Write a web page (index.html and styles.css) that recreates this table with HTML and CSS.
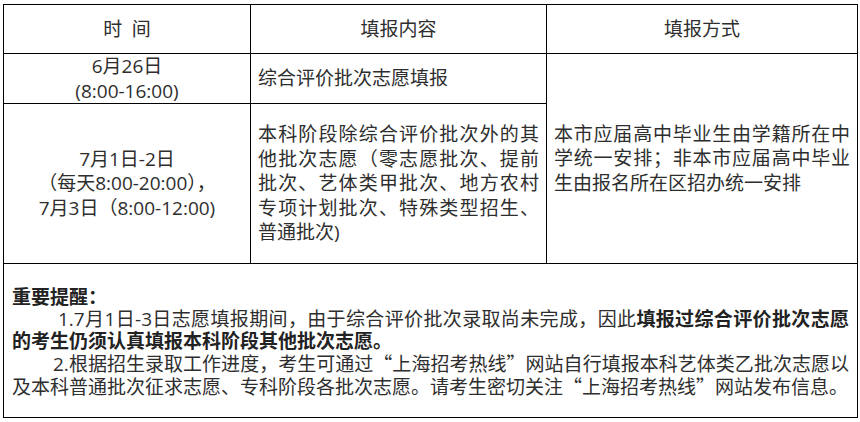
FILE: index.html
```html
<!DOCTYPE html>
<html lang="zh-CN">
<head>
<meta charset="utf-8">
<title>志愿填报安排</title>
<link rel="stylesheet" href="styles.css">
</head>
<body>
<div class="page">
  <table class="schedule">
    <colgroup>
      <col class="c-time">
      <col class="c-content">
      <col class="c-method">
    </colgroup>
    <tr class="head">
      <td class="center">时&ensp;间</td>
      <td class="center">填报内容</td>
      <td class="center">填报方式</td>
    </tr>
    <tr class="row1">
      <td class="center lift">6月26日<br>(8:00-16:00)</td>
      <td class="text">综合评价批次志愿填报</td>
      <td class="text method" rowspan="2">本市应届高中毕业生由学籍所在中学统一安排；非本市应届高中毕业生由报名所在区招办统一安排</td>
    </tr>
    <tr class="row2">
      <td class="center">7月1日-2日<br>（每天8:00-20:00），<br>7月3日（8:00-12:00)</td>
      <td class="text">本科阶段除综合评价批次外的其他批次志愿（零志愿批次、提前批次、艺体类甲批次、地方农村专项计划批次、特殊类型招生、普通批次)</td>
    </tr>
    <tr class="notes">
      <td colspan="3">
        <p class="title">重要提醒：</p>
        <p class="para first">1.7月1日-3日志愿填报期间，由于综合评价批次录取尚未完成，因此<strong>填报过综合评价批次志愿的考生仍须认真填报本科阶段其他批次志愿。</strong></p>
        <p class="para">2.根据招生录取工作进度，考生可通过<span class="cjk">“上海招考热线”</span>网站自行填报本科艺体类乙批次志愿以及本科普通批次征求志愿、专科阶段各批次志愿。请考生密切关注<span class="cjk">“上海招考热线”</span>网站发布信息。</p>
      </td>
    </tr>
  </table>
</div>
</body>
</html>
```
FILE: styles.css
```css
html, body {
  margin: 0;
  padding: 0;
  background: #ffffff;
}

body {
  font-family: "Open Sans", "Noto Sans CJK SC", sans-serif;
  font-size: 19px;
  color: #2e2e2e;
}

.cjk {
  font-family: "Noto Sans CJK SC", sans-serif;
}

.page {
  padding: 4px 3px 0 3px;
}

.schedule {
  width: 854px;
  border-collapse: collapse;
  table-layout: fixed;
}

.c-time { width: 247px; }
.c-content { width: 296px; }
.c-method { width: 311px; }

.schedule td {
  border: 1px solid #000;
  padding: 0 7px;
  line-height: 24.5px;
  vertical-align: middle;
}

.center {
  text-align: center;
}

.lift {
  padding-bottom: 4px;
}

.text {
  text-align: justify;
}

.head td { height: 48px; }
.row1 td { height: 49px; }
.row2 td { height: 159px; }

.notes td {
  height: 152px;
  padding: 22px 8px 19px 8px;
  line-height: 22px;
  box-sizing: border-box;
  vertical-align: top;
}

.notes p {
  margin: 0;
  text-align: justify;
}

.notes .title {
  font-weight: bold;
  color: #222;
}

.notes .para {
  text-indent: 41px;
}

.notes .para.first {
  text-indent: 46px;
}

.notes strong {
  color: #222;
}
```
